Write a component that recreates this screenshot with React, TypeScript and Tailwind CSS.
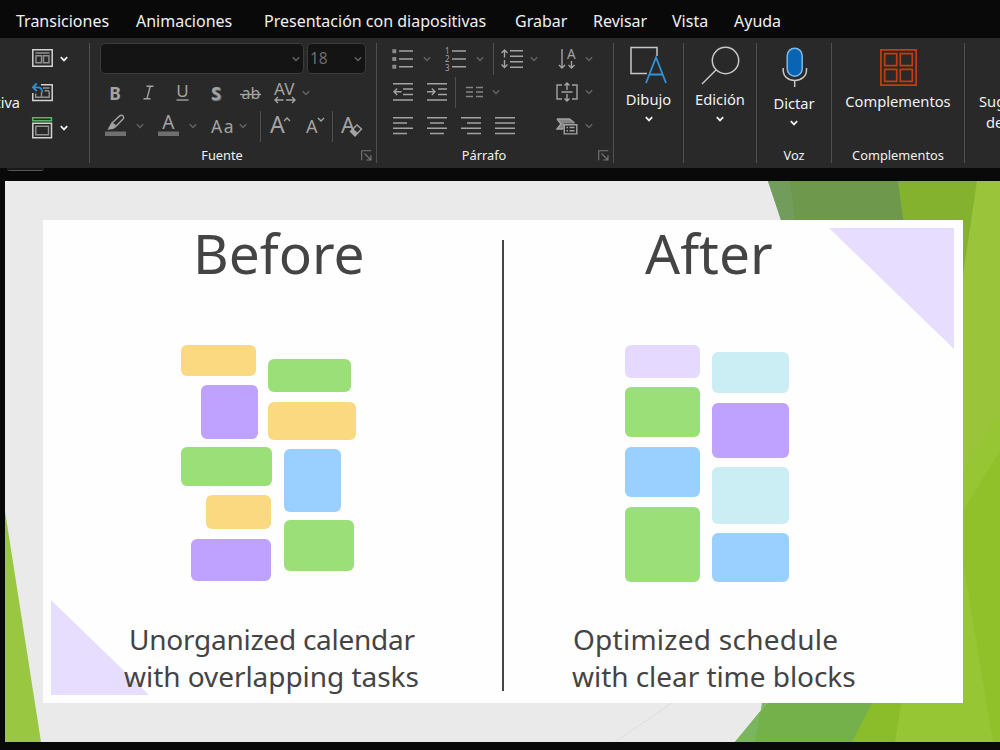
import type { ReactNode } from "react";
import clsx from "clsx";

const tabs = [
  { label: "Transiciones", width: "w-[120px]" },
  { label: "Animaciones", width: "w-[128px]" },
  { label: "Presentación con diapositivas", width: "w-[251px]" },
  { label: "Grabar", width: "w-[78px]" },
  { label: "Revisar", width: "w-[79px]" },
  { label: "Vista", width: "w-[62px]" },
  { label: "Ayuda", width: "w-[80px]" },
];

function Chevron({ bright = false, className }: { bright?: boolean; className?: string }) {
  return (
    <svg
      width="8"
      height="6"
      viewBox="0 0 8 6"
      fill="none"
      stroke={bright ? "#f0f0f0" : "#646464"}
      strokeWidth={bright ? 1.8 : 1.4}
      className={clsx("shrink-0", className)}
    >
      <path d="M.8 1.2 4 4.4 7.2 1.2" />
    </svg>
  );
}

function Divider({ className }: { className?: string }) {
  return <div className={clsx("w-px shrink-0 bg-[#505050]", className)} />;
}

function Icon({ w, h, className, children }: { w: number; h: number; className?: string; children: ReactNode }) {
  return (
    <svg
      width={w}
      height={h}
      viewBox={`0 0 ${w} ${h}`}
      fill="none"
      stroke="#a3a3a3"
      strokeWidth="1.4"
      className={clsx("shrink-0 overflow-visible", className)}
    >
      {children}
    </svg>
  );
}

function Glyph({ x, y, size, children }: { x: number; y: number; size: number; children: string }) {
  return (
    <text x={x} y={y} fontSize={size} fill="#a3a3a3" stroke="none">
      {children}
    </text>
  );
}

function Launcher() {
  return (
    <Icon w={11} h={11} className="absolute right-[4px] bottom-[2px]">
      <path d="M.7 10.3V.7h9.6M3.5 3.5l6 6M10 5.2V10H5.2" stroke="#777" strokeWidth="1.1" />
    </Icon>
  );
}

function GroupLabel({ className, children }: { className?: string; children: string }) {
  return (
    <div className={clsx("mt-auto h-[16px] text-center text-[12.8px] leading-[16px] text-[#f0f0f0]", className)}>
      {children}
    </div>
  );
}

function SlidesGroup() {
  return (
    <section className="flex w-[89px] shrink-0">
      <div className="flex w-[20px] justify-end overflow-hidden pt-[49px] text-[14.5px] leading-5 whitespace-nowrap">
        <span>diapositiva</span>
      </div>
      <div className="ml-[12px] flex flex-col">
        <div className="mt-[6px] flex items-center gap-[7px]">
          <Icon w={21} h={18}>
            <path d="M.8.8h19.400v16.400H.8z" stroke="#d2d2d2" strokeWidth="1.5" />
            <path d="M3.5 4h14M4 6.800h5.500v7H4zM11.500 6.800H17v7h-5.500z" stroke="#929292" />
          </Icon>
          <Chevron bright className="mt-[2px]" />
        </div>
        <Icon w={21} h={19} className="mt-[16px]">
          <path d="M9 1.8h11.200v15.800H.8V10" stroke="#d2d2d2" strokeWidth="1.5" />
          <path d="M11 5h6.500M12.500 7.800h4.500M3.700 10.500V14.200h13.500V8M9.500 9v5" stroke="#929292" />
          <path d="M4.800.5.9 4.300l3.900 3.800M1.500 4.300H6c3 0 4.200 1.700 4.200 5.200" stroke="#2f8fd5" strokeWidth="1.8" />
        </Icon>
        <div className="mt-[15px] flex items-center gap-[7px]">
          <Icon w={21} h={22}>
            <path d="M.7.7h18.800v3.100H.7z" stroke="#55b766" strokeWidth="1.5" />
            <path d="M.8 6.300h18.700v14.500H.8z" stroke="#d2d2d2" strokeWidth="1.5" />
            <path d="M3.800 9.300h12.700v8.500H3.800z" stroke="#929292" />
          </Icon>
          <Chevron bright />
        </div>
      </div>
    </section>
  );
}

function FontGroup() {
  return (
    <section className="relative flex w-[286px] shrink-0 flex-col">
      <div className="ml-[10px] flex gap-[3px]">
        <div className="flex h-[31px] w-[204px] items-center justify-end rounded-[5px] border border-[#3b3b3b] bg-[#141414] pr-[3px]">
          <Chevron />
        </div>
        <div className="flex h-[31px] w-[59px] items-center justify-between rounded-[5px] border border-[#3b3b3b] bg-[#141414] pr-[3px] pl-[2px] text-[15.500px] text-[#6c6c6c]">
          <span>18</span>
          <Chevron />
        </div>
      </div>
      <div className="mt-[8px] ml-[8px] flex h-[22px] items-center text-center text-[#a3a3a3]">
        <span className="w-[34px] text-[17.500px] leading-[20px] font-bold">B</span>
        <Icon w={34} h={22}>
          <path d="M14.500 4.300h7M11.500 16.700h7M18.200 4.300l-3.200 12.400" />
        </Icon>
        <Icon w={33} h={22}>
          <Glyph x={10.300} y={15} size={17}>U</Glyph>
          <path d="M10.500 18h12" />
        </Icon>
        <span className="w-[34px] text-[18px] leading-[20px] font-bold [text-shadow:1px_1px_1px_#888]">S</span>
        <Icon w={35} h={22}>
          <Glyph x={8.500} y={16.500} size={16}>ab</Glyph>
          <path d="M7 12.500h21" />
        </Icon>
        <Icon w={33} h={22}>
          <Glyph x={6} y={13} size={17}>AV</Glyph>
          <path d="M7 18h8.500M10 15l-3 3 3 3M18 18h9M24 15l3 3-3 3" />
        </Icon>
        <Chevron className="ml-px" />
      </div>
      <div className="mt-[6px] ml-[15px] flex h-[32px] items-center">
        <Icon w={21} h={22}>
          <path d="M0 16.500h21v4.500H0z" fill="#6f6f6f" stroke="none" />
          <path d="M7 8 14.700.9q2.300-1.300 3.500.2 1.200 1.500-.2 3L11.200 11z" />
          <path d="M6.200 7.800 11.200 12 8.200 14.100 2.500 14.800z" fill="#a3a3a3" stroke="none" />
        </Icon>
        <Chevron className="ml-[10px]" />
        <Icon w={21} h={22} className="ml-[14px]">
          <path d="M0 16.500h21v4.500H0z" fill="#6f6f6f" stroke="none" />
          <Glyph x={4.300} y={14} size={19}>A</Glyph>
        </Icon>
        <Chevron className="ml-[10px]" />
        <Icon w={23} h={22} className="ml-[14px]">
          <Glyph x={0} y={17.500} size={17.500}>A</Glyph>
          <Glyph x={12.800} y={17.500} size={17.500}>a</Glyph>
        </Icon>
        <Chevron className="ml-[5px]" />
        <Divider className="ml-[13px] h-[31px]" />
        <Icon w={21} h={22} className="ml-[9px]">
          <Glyph x={0} y={18} size={23}>A</Glyph>
          <path d="M14 6 17 3 20 6" />
        </Icon>
        <Icon w={19} h={22} className="ml-[15px]">
          <Glyph x={0} y={18} size={18}>A</Glyph>
          <path d="M12 3 15 6 18 3" />
        </Icon>
        <Divider className="ml-[7px] h-[31px]" />
        <Icon w={22} h={22} className="ml-[8px]">
          <Glyph x={0} y={17.500} size={22}>A</Glyph>
          <path d="m9.500 16.500 6.500-6.500 4.500 4-6.500 7z" fill="#292929" />
          <path d="m9.500 16.500 2.800-2.800 4.600 4.400-2.900 2.900z" fill="#a3a3a3" stroke="none" />
        </Icon>
      </div>
      <GroupLabel className="mr-[22px]">Fuente</GroupLabel>
      <Launcher />
    </section>
  );
}

function Lines({ d }: { d: string }) {
  return (
    <Icon w={20} h={18}>
      <path d={d} />
    </Icon>
  );
}

function ParagraphGroup() {
  return (
    <section className="relative flex w-[236px] shrink-0 flex-col">
      <div className="ml-[15px] flex h-[32px] items-center">
        <Icon w={21} h={22}>
          <path d="M.3 1.300h4v4H.3zM.3 9h4v4H.3zM.3 16.700h4v4H.3z" fill="#8a8a8a" stroke="none" />
          <path d="M7 3h14M7 11h14M7 18.700h14" />
        </Icon>
        <Chevron className="ml-[10px]" />
        <Icon w={22} h={22} className="ml-[14px]">
          <Glyph x={0} y={6} size={8}>1</Glyph>
          <Glyph x={0} y={14} size={8}>2</Glyph>
          <Glyph x={0} y={22.500} size={8}>3</Glyph>
          <path d="M7 3h14M7 11h14M7 18.700h14" />
        </Icon>
        <Chevron className="ml-[9px]" />
        <Divider className="ml-[9px] h-[32px]" />
        <Icon w={22} h={22} className="ml-[7px]">
          <path d="M3.500 2v7.500M.5 5l3-3 3 3M3.500 12v7.500M.5 16.500l3 3 3-3M9 2.700h13M9 8.200h13M9 13.700h13M9 19.200h13" />
        </Icon>
        <Chevron className="ml-[7px]" />
        <Icon w={19} h={22} className="ml-[20px]">
          <path d="M4 1v19M1 17l3 3 3-3M13.500 13v7M10.500 17l3 3 3-3" />
          <Glyph x={9} y={10.500} size={13.500}>A</Glyph>
        </Icon>
        <Chevron className="ml-[8px]" />
      </div>
      <div className="mt-[1px] ml-[16px] flex h-[32px] items-center">
        <Lines d="M0 .8h20M10 6h10M10 11.500h10M0 17h20M8.500 8.700H1M4.200 5.500l-3.200 3.200 3.200 3.200" />
        <span className="w-[14px]" />
        <Lines d="M0 .8h20M11 6h9M11 11.500h9M0 17h20M0 8.700h8M4.800 5.500l3.200 3.200-3.200 3.200" />
        <Divider className="ml-[8px] h-[31px]" />
        <Icon w={17} h={16} className="ml-[10px]">
          <path d="M0 3.500h7M0 8h7M0 12.500h7M10 3.500h7M10 8h7M10 12.500h7" stroke="#858585" />
        </Icon>
        <Chevron className="ml-[9px]" />
        <Icon w={22} h={20} className="ml-[56px]">
          <path d="M6 3H1v14h5M16 3h5v14h-5M11 1v7M8.500 3.500 11 1l2.500 2.500M11 12v7M8.500 16.500 11 19l2.500-2.500M5.500 10h11" />
        </Icon>
        <Chevron className="ml-[7px]" />
      </div>
      <div className="mt-[1px] ml-[16px] flex h-[34px] items-center">
        <div className="flex gap-[14px]">
          <Lines d="M0 .8h20M0 6h14M0 11.300h20M0 16.500h14" />
          <Lines d="M0 .8h20M3 6h14M0 11.300h20M3 16.500h14" />
          <Lines d="M0 .8h20M6 6h14M0 11.300h20M6 16.500h14" />
          <Lines d="M0 .8h20M0 6h20M0 11.300h20M0 16.500h20" />
        </div>
        <Icon w={22} h={18} className="ml-[41px]">
          <path d="M1 2h12.500l5 4.500H8V12H1l4-5z" fill="#858585" stroke="none" />
          <path d="M1 2h12.500l5 4M1 2l4 5-4 5h6" />
          <path d="M8.200 7.700h12.600v9.200H8.200z" fill="#292929" />
          <path d="M10.500 10.500H12M13.500 10.500h5M10.500 13.800H12M13.500 13.800h5" />
        </Icon>
        <Chevron className="ml-[7px]" />
      </div>
      <GroupLabel className="mr-[22px]">Párrafo</GroupLabel>
      <Launcher />
    </section>
  );
}

type BigButtonProps = { width: string; label: string; footer?: string; arrow?: boolean; children: ReactNode; pad: string };

function BigButton({ width, label, footer, arrow = true, children, pad }: BigButtonProps) {
  return (
    <section className={clsx("flex shrink-0 flex-col items-center", width)}>
      <div className={clsx("flex flex-col items-center", pad)}>{children}</div>
      <div className="text-[14.7px] leading-5 whitespace-nowrap">{label}</div>
      {arrow && <Chevron bright className="mt-[7px]" />}
      {footer && <GroupLabel>{footer}</GroupLabel>}
    </section>
  );
}

function Ribbon() {
  return (
    <div className="relative flex h-[130px] overflow-hidden bg-[#292929] pt-[5px] pb-[5px] text-[#f0f0f0]">
      <SlidesGroup />
      <Divider />
      <FontGroup />
      <Divider />
      <ParagraphGroup />
      <Divider />
      <BigButton width="w-[69px]" label="Dibujo" pad="h-[46px] pt-[3px]">
        <Icon w={38} h={39}>
          <path d="M17 27.500H1V1.500h26V10" stroke="#c8c8c8" strokeWidth="1.5" />
          <path d="m16 37 10-25.500L36 37M19.500 28.500h13" stroke="#3493d8" strokeWidth="1.8" />
        </Icon>
      </BigButton>
      <Divider />
      <BigButton width="w-[72px]" label="Edición" pad="h-[46px] pt-[3px]">
        <Icon w={39} h={39}>
          <circle cx="24.5" cy="14.5" r="13.2" stroke="#c8c8c8" strokeWidth="1.5" />
          <path d="M15 24 1 38" stroke="#c8c8c8" strokeWidth="1.5" />
        </Icon>
      </BigButton>
      <Divider />
      <BigButton width="w-[74px]" label="Dictar" footer="Voz" pad="h-[50px] pt-[4px]">
        <Icon w={26} h={41} className="ml-px">
          <rect x="5.2" y="1.2" width="15" height="28" rx="7.5" fill="#0a64b4" stroke="#7ab8e8" strokeWidth="1.5" />
          <path d="M1.200 21v2c0 6.500 5 10.500 11.500 10.500S24.500 29.500 24.500 23v-2M12.700 33.500V40" stroke="#c8c8c8" strokeWidth="1.5" />
        </Icon>
      </BigButton>
      <Divider />
      <BigButton width="w-[132px]" label="Complementos" footer="Complementos" arrow={false} pad="h-[48px] pt-[6px]">
        <Icon w={37} h={37}>
          <path d="M.9.9h35.200v35.200H.9zM4.700 4.700h12v12h-12zM20.300 4.700h12v12h-12zM4.700 20.300h12v12h-12zM20.300 20.300h12v12h-12z" stroke="#c43e0c" strokeWidth="1.7" />
        </Icon>
      </BigButton>
      <Divider />
      <div className="shrink-0 pt-[48px] pl-[14px] text-[14.7px] leading-[21px] whitespace-nowrap">
        <p>Sugerencias</p>
        <p className="pl-[7px]">de diseño</p>
      </div>
    </div>
  );
}

type Block = { w: number; h: number; mt: number; ml: number; color: string };

const GREEN = "bg-[#9adf78]";
const YELLOW = "bg-[#fbd981]";
const PURPLE = "bg-[#bfa1ff]";
const BLUE = "bg-[#9ad0ff]";
const CYAN = "bg-[#cbeef5]";
const LILAC = "bg-[#e6d9ff]";

const beforeLeft: Block[] = [
  { w: 75, h: 31, mt: 0, ml: 0, color: YELLOW },
  { w: 57, h: 54, mt: 9.5, ml: 19.5, color: PURPLE },
  { w: 91, h: 39, mt: 8, ml: 0, color: GREEN },
  { w: 65, h: 34, mt: 9, ml: 24.5, color: YELLOW },
  { w: 80, h: 42, mt: 10, ml: 9.5, color: PURPLE },
];

const beforeRight: Block[] = [
  { w: 83, h: 33, mt: 14, ml: 0, color: GREEN },
  { w: 88, h: 38, mt: 10, ml: 0, color: YELLOW },
  { w: 57, h: 63, mt: 9.5, ml: 16, color: BLUE },
  { w: 70, h: 51, mt: 8, ml: 16, color: GREEN },
];

const afterLeft: Block[] = [
  { w: 75, h: 33, mt: 0, ml: 0, color: LILAC },
  { w: 75, h: 50, mt: 9, ml: 0, color: GREEN },
  { w: 75, h: 50, mt: 10, ml: 0, color: BLUE },
  { w: 75, h: 75, mt: 10, ml: 0, color: GREEN },
];

const afterRight: Block[] = [
  { w: 77, h: 41, mt: 7, ml: 0, color: CYAN },
  { w: 77, h: 55, mt: 10, ml: 0, color: PURPLE },
  { w: 77, h: 57, mt: 9, ml: 0, color: CYAN },
  { w: 77, h: 49, mt: 9, ml: 0, color: BLUE },
];

function Column({ blocks, className }: { blocks: Block[]; className: string }) {
  return (
    <div className={clsx("flex shrink-0 flex-col", className)}>
      {blocks.map((b, i) => (
        <div
          key={i}
          className={clsx("rounded-[6px]", b.color)}
          style={{ width: b.w, height: b.h, marginTop: b.mt, marginLeft: b.ml }}
        />
      ))}
    </div>
  );
}

function Slide() {
  return (
    <main className="relative ml-[5px] h-[561px] overflow-hidden bg-[#eaeaea] pt-[39px] pl-[38px]">
      {/* Facet theme background */}
      <svg className="absolute inset-0" width="995" height="561" viewBox="0 0 995 561">
        <path d="M763 0H995V200H830Z" fill="#6e984b" />
        <path d="M763 0H785L790 39V69H786Z" fill="#719c5c" />
        <path d="M730 561 762 522H880V561Z" fill="#75b14a" />
        <path d="M730 561 762 522H757L750 561Z" fill="#7ab560" />
        <path d="M893 0H995V300H932Z" fill="#84b22f" />
        <path d="M847 561 867 522H995V561Z" fill="#8abd29" />
        <path d="M890 561 896 522 940 430H995V561Z" fill="#96c633" />
        <path d="M972 0H995V561H958V94Z" fill="#9ac53a" />
        <path d="M995 230 958 290V522L950 561H995Z" fill="#96c634" />
        <path d="M995 270 958 330V380L988 561H995Z" fill="#90c12a" />
        <path d="M0 330 36 561H0Z" fill="#9ac741" />
        <path d="M610 561 670 520" stroke="#dcdcdc" />
      </svg>

      <article className="relative flex h-[483px] w-[920px] bg-[#fefefe] text-[#444]">
        <div className="absolute top-[8px] right-[9px] h-[121px] w-[125px] bg-[#e7deff] [clip-path:polygon(0_0,100%_0,100%_100%)]" />
        <div className="absolute bottom-[8px] left-[8px] h-[95px] w-[98px] bg-[#e7deff] [clip-path:polygon(0_0,100%_100%,0_100%)]" />

        <section className="relative w-[459px] shrink-0">
          <h2 className="h-[124.500px] pl-[150px] text-[55px] leading-[65px]">Before</h2>
          <div className="flex h-[275.500px] pl-[138px]">
            <Column blocks={beforeLeft} className="w-[87px]" />
            <Column blocks={beforeRight} className="w-[90px]" />
          </div>
          <p className="pl-[86px] text-[28px] leading-[38px] tracking-[-0.250px] whitespace-nowrap">Unorganized calendar</p>
          <p className="pl-[81px] text-[28px] leading-[37px] tracking-[-0.050px] whitespace-nowrap">with overlapping tasks</p>
        </section>
        <div className="mt-[20px] h-[451px] w-[2px] shrink-0 bg-[#444]" />
        <section className="relative w-[459px] shrink-0">
          <h2 className="h-[124.500px] pl-[141px] text-[55px] leading-[65px]">After</h2>
          <div className="flex h-[275.500px] pl-[121px]">
            <Column blocks={afterLeft} className="w-[87px]" />
            <Column blocks={afterRight} className="w-[80px]" />
          </div>
          <p className="pl-[69px] text-[28px] leading-[38px] tracking-[0.250px] whitespace-nowrap">Optimized schedule</p>
          <p className="pl-[68px] text-[28px] leading-[37px] tracking-[-0.050px] whitespace-nowrap">with clear time blocks</p>
        </section>
      </article>
    </main>
  );
}

export default function App() {
  return (
    <div className="h-[750px] w-[1000px] overflow-hidden bg-[#090909] font-['Noto_Sans',sans-serif]">
      <nav className="flex h-[38px] items-center pt-[3px] pl-[16px] text-[16px] text-[#f0f0f0]">
        {tabs.map(({ label, width }) => (
          <span key={label} className={clsx("shrink-0 whitespace-nowrap", width)}>
            {label}
          </span>
        ))}
      </nav>
      <Ribbon />
      <div className="h-[13px]">
        <div className="ml-[7px] h-[3px] w-[37px] rounded-b-[6px] border-b border-[#555] bg-[#191919]" />
      </div>
      <Slide />
    </div>
  );
}
